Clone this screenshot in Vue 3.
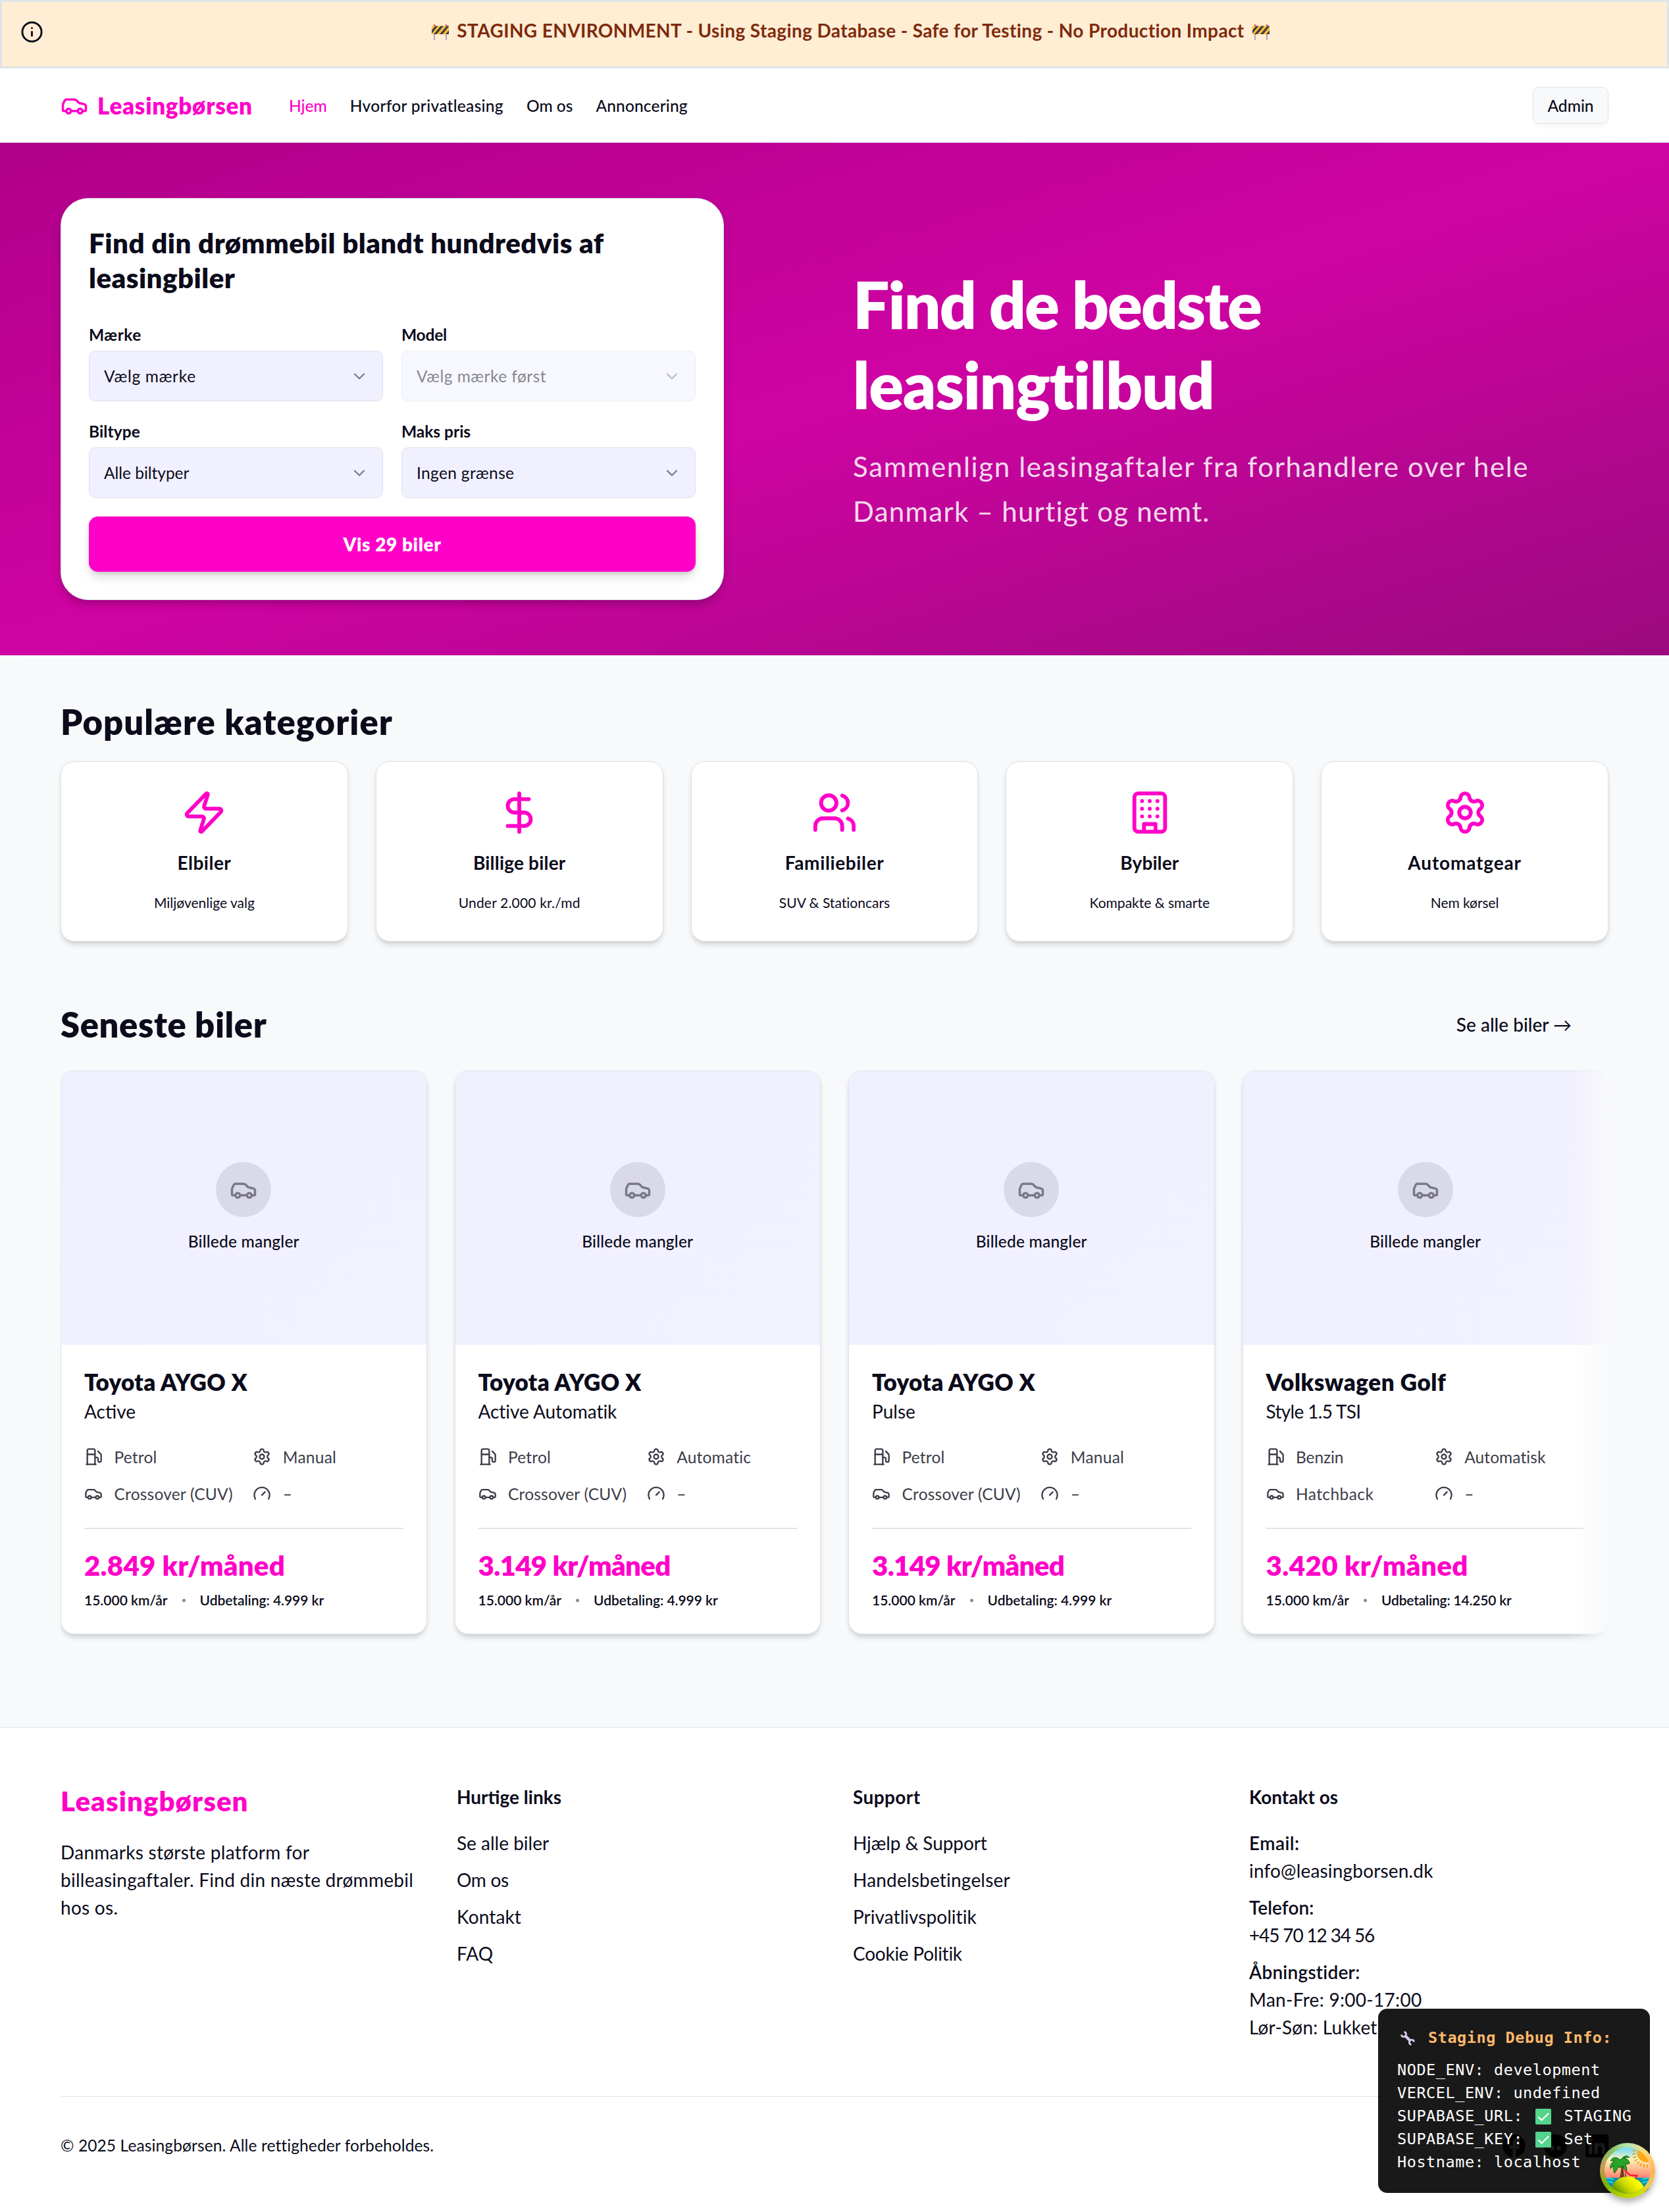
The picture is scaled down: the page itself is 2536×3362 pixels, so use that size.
<script setup>
import { h } from 'vue'

const icons = {
  info: '<circle cx="12" cy="12" r="10"/><path d="M12 16v-4"/><path d="M12 8h.01"/>',
  car: '<path d="M19 17h2c.6 0 1-.4 1-1v-3c0-.9-.7-1.7-1.5-1.9C18.7 10.6 16 10 16 10s-1.3-1.4-2.2-2.3c-.5-.4-1.1-.7-1.8-.7H5c-.6 0-1.1.4-1.4.9l-1.4 2.9A3.7 3.7 0 0 0 2 12v4c0 .6.4 1 1 1h2"/><circle cx="7" cy="17" r="2"/><path d="M9 17h6"/><circle cx="17" cy="17" r="2"/>',
  chevron: '<path d="m6 9 6 6 6-6"/>',
  zap: '<path d="M4 14a1 1 0 0 1-.78-1.63l9.9-10.2a.5.5 0 0 1 .86.46l-1.92 6.02A1 1 0 0 0 13 10h7a1 1 0 0 1 .78 1.63l-9.9 10.2a.5.5 0 0 1-.86-.46l1.92-6.02A1 1 0 0 0 11 14z"/>',
  dollar: '<path d="M12 2v20"/><path d="M17 5H9.5a3.5 3.5 0 0 0 0 7h5a3.5 3.5 0 0 1 0 7H6"/>',
  users: '<path d="M16 21v-2a4 4 0 0 0-4-4H6a4 4 0 0 0-4 4v2"/><path d="M16 3.128a4 4 0 0 1 0 7.744"/><path d="M22 21v-2a4 4 0 0 0-3-3.87"/><circle cx="9" cy="7" r="4"/>',
  building: '<rect width="16" height="20" x="4" y="2" rx="2"/><path d="M9 22v-4h6v4"/><path d="M8 6h.01M16 6h.01M12 6h.01M12 10h.01M12 14h.01M16 10h.01M16 14h.01M8 10h.01M8 14h.01"/>',
  gear: '<path d="M9.671 4.136a2.34 2.34 0 0 1 4.659 0 2.34 2.34 0 0 0 3.319 1.915 2.34 2.34 0 0 1 2.33 4.033 2.34 2.34 0 0 0 0 3.831 2.34 2.34 0 0 1-2.33 4.033 2.34 2.34 0 0 0-3.319 1.915 2.34 2.34 0 0 1-4.659 0 2.34 2.34 0 0 0-3.32-1.915 2.34 2.34 0 0 1-2.33-4.033 2.34 2.34 0 0 0 0-3.831A2.34 2.34 0 0 1 6.35 6.051a2.34 2.34 0 0 0 3.319-1.915"/><circle cx="12" cy="12" r="3"/>',
  fuel: '<path d="M3 22h12"/><path d="M4 9h10"/><path d="M14 22V4a2 2 0 0 0-2-2H6a2 2 0 0 0-2 2v18"/><path d="M14 13h2a2 2 0 0 1 2 2v2a2 2 0 0 0 2 2a2 2 0 0 0 2-2V9.83a2 2 0 0 0-.59-1.42L18 5"/>',
  gauge: '<path d="m12 14 4-4"/><path d="M3.34 19a10 10 0 1 1 17.32 0"/>',
}

const Icon = (props) =>
  h('svg', {
    viewBox: '0 0 24 24',
    width: props.size,
    height: props.size,
    fill: 'none',
    stroke: 'currentColor',
    'stroke-width': props.stroke || 2,
    'stroke-linecap': 'round',
    'stroke-linejoin': 'round',
    innerHTML: icons[props.name],
  })
Icon.props = ['name', 'size', 'stroke']

const Barrier = () =>
  h('svg', {
    viewBox: '0 0 26 24',
    width: 26,
    height: 24,
    innerHTML:
      '<path d="M4 15v9M22 15v9" stroke="#b5a3bb" stroke-width="2"/><circle cx="4" cy="1.6" r="1.4" fill="#d8355c"/><circle cx="22" cy="1.6" r="1.4" fill="#d8355c"/><rect y="2.5" width="26" height="12.5" rx="1" fill="#fcc034"/><path d="M0 9l5.500-6.500h4L0 14zM3 15l10.500-12.500h4.500L7.500 15zM12 15l10.500-12.500H26v.8L16.500 15zM21 15l5-6v6z" fill="#433b4b"/>',
  })

const CheckBox = () =>
  h('svg', {
    viewBox: '0 0 24 24',
    width: 24,
    height: 24,
    innerHTML:
      '<rect width="24" height="24" rx="1.500" fill="#55d48b"/><path d="M5 13l4.500 4.500L19.500 7.500" fill="none" stroke="#fff" stroke-width="2.200" stroke-linecap="round" stroke-linejoin="round"/>',
  })

const nav = [
  { t: 'Hjem', ls: 0, active: true },
  { t: 'Hvorfor privatleasing', ls: 0.3 },
  { t: 'Om os', ls: 0 },
  { t: 'Annoncering', ls: 0.15 },
]

const fields = [
  { label: 'Mærke', lls: 0.49, value: 'Vælg mærke', ls: 0.7 },
  { label: 'Model', lls: -0.2, value: 'Vælg mærke først', ls: 0.48, disabled: true },
  { label: 'Biltype', lls: 0.09, value: 'Alle biltyper', ls: -0.02 },
  { label: 'Maks pris', lls: 0, value: 'Ingen grænse', ls: 0.35 },
]

const categories = [
  { icon: 'zap', t: 'Elbiler', ls: 0.49, s: 'Miljøvenlige valg', sls: 0 },
  { icon: 'dollar', t: 'Billige biler', ls: 0.2, s: 'Under 2.000 kr./md', sls: 0.18 },
  { icon: 'users', t: 'Familiebiler', ls: 0.63, s: 'SUV & Stationcars', sls: 0.02 },
  { icon: 'building', t: 'Bybiler', ls: 0.1, s: 'Kompakte & smarte', sls: 0 },
  { icon: 'gear', t: 'Automatgear', ls: 0.84, s: 'Nem kørsel', sls: -0.05 },
]

const cuv = ['car', 'Crossover (CUV)', 0.22]
const none = ['gauge', '–', 0]
const cars = [
  { t: 'Toyota AYGO X', ls: 0.35, v: 'Active', vls: 0, specs: [['fuel', 'Petrol', 0.2], ['gear', 'Manual', 0.25], cuv, none], price: '2.849 kr/måned', pls: 0.22, pay: 'Udbetaling: 4.999 kr', yls: -0.04 },
  { t: 'Toyota AYGO X', ls: 0.35, v: 'Active Automatik', vls: -0.05, specs: [['fuel', 'Petrol', 0.2], ['gear', 'Automatic', 0.2], cuv, none], price: '3.149 kr/måned', pls: -0.7, pay: 'Udbetaling: 4.999 kr', yls: -0.04 },
  { t: 'Toyota AYGO X', ls: 0.35, v: 'Pulse', vls: 0, specs: [['fuel', 'Petrol', 0.2], ['gear', 'Manual', 0.25], cuv, none], price: '3.149 kr/måned', pls: -0.7, pay: 'Udbetaling: 4.999 kr', yls: -0.04 },
  { t: 'Volkswagen Golf', ls: 0.55, v: 'Style 1.5 TSI', vls: -0.65, specs: [['fuel', 'Benzin', -0.1], ['gear', 'Automatisk', 0.08], ['car', 'Hatchback', 0.42], none], price: '3.420 kr/måned', pls: 0.38, pay: 'Udbetaling: 14.250 kr', yls: -0.19 },
]

const linkColumns = [
  { title: 'Hurtige links', tls: 0, links: [['Se alle biler', 0], ['Om os', -0.3], ['Kontakt', 0.15], ['FAQ', 0]] },
  { title: 'Support', tls: 0.4, links: [['Hjælp & Support', -0.08], ['Handelsbetingelser', 0.2], ['Privatlivspolitik', 0.05], ['Cookie Politik', -0.25]] },
]

const contact = [
  { k: 'Email:', kls: 0.42, lines: [['info@leasingborsen.dk', 0.18]] },
  { k: 'Telefon:', kls: 0.06, lines: [['+45 70 12 34 56', -1.15]] },
  { k: 'Åbningstider:', kls: 0.23, lines: [['Man-Fre: 9:00-17:00', 0.3], ['Lør-Søn: Lukket', 0.2]] },
]

const sp = (v) => ({ letterSpacing: v + 'px' })
</script>

<template>
  <div class="page">
    <div class="banner">
      <Icon name="info" :size="35" />
      <div class="banner-text"><Barrier /><span>STAGING ENVIRONMENT - Using Staging Database - Safe for Testing - No Production Impact</span><Barrier /></div>
    </div>

    <header class="header">
      <div class="logo"><Icon name="car" :size="42" /><span>Leasingbørsen</span></div>
      <nav class="nav">
        <a v-for="n in nav" :key="n.t" :class="{ active: n.active }" :style="sp(n.ls)">{{ n.t }}</a>
      </nav>
      <button class="admin">Admin</button>
    </header>

    <section class="hero">
      <div class="search">
        <h2>Find din drømmebil blandt hundredvis af leasingbiler</h2>
        <div class="fields">
          <div v-for="f in fields" :key="f.label" class="field">
            <label :style="sp(f.lls)">{{ f.label }}</label>
            <div class="select" :class="{ disabled: f.disabled }">
              <span :style="sp(f.ls)">{{ f.value }}</span>
              <Icon name="chevron" :size="28" />
            </div>
          </div>
        </div>
        <button class="submit">Vis 29 biler</button>
      </div>
      <div class="pitch">
        <h1><span class="l1">Find de bedste</span><br /><span class="l2">leasingtilbud</span></h1>
        <p><span class="l3">Sammenlign leasingaftaler fra forhandlere over hele</span><br /><span class="l4">Danmark – hurtigt og nemt.</span></p>
      </div>
    </section>

    <main class="main">
      <h2 class="section-title popular">Populære kategorier</h2>
      <div class="categories">
        <div v-for="c in categories" :key="c.t" class="category">
          <Icon :name="c.icon" :size="70" />
          <h3 :style="sp(c.ls)">{{ c.t }}</h3>
          <p :style="sp(c.sls)">{{ c.s }}</p>
        </div>
      </div>

      <div class="section-head">
        <h2 class="section-title latest">Seneste biler</h2>
        <a class="all">Se alle biler <span class="arrow">→</span></a>
      </div>
      <div class="cars">
        <article v-for="(c, i) in cars" :key="i" class="car">
          <div class="photo">
            <div class="badge"><Icon name="car" :size="42" /></div>
            <span>Billede mangler</span>
          </div>
          <div class="body">
            <h3 :style="sp(c.ls)">{{ c.t }}</h3>
            <p class="variant" :style="sp(c.vls)">{{ c.v }}</p>
            <div class="specs">
              <div v-for="s in c.specs" :key="s[0]" class="spec">
                <Icon :name="s[0]" :size="28" />
                <span :style="sp(s[2])">{{ s[1] }}</span>
              </div>
            </div>
            <div class="rule"></div>
            <div class="price" :style="sp(c.pls)">{{ c.price }}</div>
            <div class="meta">
              <span>15.000 km/år</span><i></i><span :style="sp(c.yls)">{{ c.pay }}</span>
            </div>
          </div>
        </article>
      </div>
    </main>

    <footer class="footer">
      <div class="columns">
        <div>
          <div class="brand">Leasingbørsen</div>
          <p class="about">Danmarks største platform for<br />billeasingaftaler. Find din næste drømmebil<br />hos os.</p>
        </div>
        <div v-for="col in linkColumns" :key="col.title">
          <h4 :style="sp(col.tls)">{{ col.title }}</h4>
          <div class="links">
            <a v-for="l in col.links" :key="l[0]" :style="sp(l[1])">{{ l[0] }}</a>
          </div>
        </div>
        <div>
          <h4>Kontakt os</h4>
          <div class="links">
            <div v-for="c in contact" :key="c.k">
              <div class="key" :style="sp(c.kls)">{{ c.k }}</div>
              <div v-for="l in c.lines" :key="l[0]" :style="sp(l[1])">{{ l[0] }}</div>
            </div>
          </div>
        </div>
      </div>
      <div class="bottom">
        <span>© 2025 Leasingbørsen. Alle rettigheder forbeholdes.</span>
        <div class="social">
          <svg viewBox="0 0 36 36"><path fill-rule="evenodd" d="M18 0a18 18 0 0 1 3 35.700V23h5l1-5.500h-6V14c0-2 1-3 3-3h3V6c-7-1.500-11 1-11 7v4.500h-5V23h5v12.900A18 18 0 0 1 18 0z" /></svg>
          <svg viewBox="0 0 36 36"><path fill-rule="evenodd" d="M18 0a18 18 0 1 1 0 36a18 18 0 1 1 0-36zM13 18a3.500 3.500 0 1 0 0 7a3.500 3.500 0 1 0 0-7zM23 18a3.500 3.500 0 1 0 0 7a3.500 3.500 0 1 0 0-7z" /></svg>
          <svg viewBox="0 0 36 36"><path fill-rule="evenodd" d="M2 0h32q2 0 2 2v32q0 2-2 2H2q-2 0-2-2V2q0-2 2-2zM5.500 13.500h5.300v17H5.500zM8.100 5a3.100 3.100 0 1 1 0 6.200a3.100 3.100 0 1 1 0-6.200zM14 13.500h5v2.400c2.500-4.300 11.700-4 11.700 4.600v10h-5.300v-9c0-5-6.100-4.500-6.100 0v9H14z" /></svg>
        </div>
      </div>
    </footer>

    <aside class="debug">
      <div class="debug-title">
        <svg class="wrench" viewBox="0 0 24 24" width="24" height="24" fill="none" stroke="#d6c9e8"><path d="M8 8l8 8" stroke-width="4.200" /><path d="M6.500 2.400A3.600 3.600 0 1 1 2.400 6.500M17.500 21.600A3.600 3.600 0 1 1 21.600 17.500" stroke-width="2.800" /></svg>
        <span>Staging Debug Info:</span>
      </div>
      <div>NODE_ENV: development</div>
      <div>VERCEL_ENV: undefined</div>
      <div class="row">SUPABASE_URL: <CheckBox class="check" /> STAGING</div>
      <div class="row">SUPABASE_KEY: <CheckBox class="check" /> Set</div>
      <div>Hostname: localhost</div>
    </aside>

    <div class="island">
      <svg viewBox="0 0 84 84" width="84" height="84">
        <defs>
          <linearGradient id="sky" x1="0" y1="7" x2="0" y2="54" gradientUnits="userSpaceOnUse">
            <stop offset="0" stop-color="#6bdcff" /><stop offset=".4" stop-color="#fdf3b8" /><stop offset=".72" stop-color="#ffb489" /><stop offset="1" stop-color="#ff7f70" />
          </linearGradient>
          <linearGradient id="sand" x1="25" y1="77" x2="50" y2="54" gradientUnits="userSpaceOnUse">
            <stop offset="0" stop-color="#4f8f00" /><stop offset=".5" stop-color="#c4d400" /><stop offset="1" stop-color="#fdfb00" />
          </linearGradient>
          <clipPath id="disc"><circle cx="42" cy="42" r="35" /></clipPath>
        </defs>
        <g clip-path="url(#disc)">
          <rect width="84" height="84" fill="url(#sky)" />
          <circle cx="71" cy="15" r="14.500" fill="#ffa914" />
          <path d="M52 11A20 20 0 0 0 74 35" fill="none" stroke="#ff9612" stroke-width="5" stroke-dasharray="1.800 3.200" />
          <rect y="53" width="84" height="31" fill="#0a8fa8" />
          <path d="M5 56q8-4 16 0M6 61q8-4 14 0M64 56q8-4 14 0M64 61q8-4 14 0" fill="none" stroke="#10d2e2" stroke-width="2.500" />
          <path d="M31 27q3 12-1 26h7q-1-15-3-27z" fill="#6b3f1d" />
          <path d="M31 26q-9-8-15 1q4 0 6 0q-7 5-6 12l5-4q-1 5 1 11q5-6 6-11l2 3l5-3q2 7 6 7q0-6-3-10q5 1 7-1q-1-7-9-8q5-2 9-1q-6-6-14 4z" fill="#28a428" stroke="#0d5b13" stroke-width="1" />
          <circle cx="42" cy="78" r="27" fill="url(#sand)" />
          <path d="M38 42l8 7l11 1" fill="none" stroke="#f5162f" stroke-width="2.300" stroke-linecap="round" />
          <path d="M39 45v7M55 51v5" stroke="#2b1a14" stroke-width="1" />
        </g>
      </svg>
    </div>
  </div>
</template>

<style>
html,
body {
  margin: 0;
  overflow: hidden;
}
</style>

<style scoped>
.page {
  width: 2536px;
  height: 3362px;
  position: relative;
  background: #f8f9fb;
  color: #0b0b1b;
  font-family: Lato, "Liberation Sans", sans-serif;
  font-size: 28px;
  font-kerning: normal;
}
.page * {
  box-sizing: border-box;
}
h1, h2, h3, h4, p {
  margin: 0;
}
svg {
  display: block;
  flex: none;
}
button {
  font-family: inherit;
  color: inherit;
  padding: 0;
}

.banner {
  height: 104px;
  display: flex;
  align-items: flex-start;
  gap: 14px;
  padding: 28px;
  border: 3px solid #dde5e8;
  background: #ffedd4;
}
.banner-text {
  flex: 1;
  display: flex;
  justify-content: center;
  gap: 12px;
  color: #7e2a0c;
  font-weight: 700;
  line-height: 31px;
  letter-spacing: 0.38px;
}
.banner-text svg {
  margin-top: 6px;
}

.header {
  height: 113px;
  display: flex;
  align-items: center;
  padding: 0 92px;
  background: #fff;
  border-bottom: 1px solid #dde5e8;
}
.logo {
  display: flex;
  align-items: center;
  gap: 14px;
  width: 347px;
  color: #ff00c8;
  font-size: 35px;
  font-weight: 800;
  line-height: 42px;
  letter-spacing: 0.7px;
}
.nav {
  flex: 1;
  display: flex;
  gap: 35px;
  font-size: 24.5px;
  font-weight: 500;
  line-height: 37px;
}
.nav .active {
  color: #ff00c8;
}
.admin {
  width: 115px;
  height: 56px;
  border: 1px solid #dde5e8;
  border-radius: 10px;
  background: #f8f9fb;
  font-size: 24.5px;
  font-weight: 500;
  box-shadow: 0 6px 10px -3px rgba(0, 0, 0, 0.05);
}

.hero {
  height: 779px;
  display: grid;
  grid-template-columns: 1008px 1fr;
  column-gap: 196px;
  align-items: center;
  padding: 0 92px;
  background: linear-gradient(to bottom right, #b0008a 0%, #cf03a3 50%, #9b0a7e 100%);
}
.search {
  height: 611px;
  padding: 41px 42px 42px;
  border: 1px solid #dde5e8;
  border-radius: 42px;
  background: #fff;
  box-shadow: 0 7px 14px -2px rgba(0, 0, 0, 0.25);
}
.search h2 {
  font-size: 42px;
  font-weight: 800;
  line-height: 52.5px;
  letter-spacing: 0.48px;
}
.fields {
  margin-top: 48px;
  display: grid;
  grid-template-columns: 1fr 1fr;
  gap: 33px 28px;
}
.field label {
  display: block;
  margin-bottom: 12px;
  font-size: 24.5px;
  font-weight: 700;
  line-height: 25px;
}
.select {
  height: 77px;
  display: flex;
  align-items: center;
  justify-content: space-between;
  padding: 0 21px 0 22px;
  border: 1px solid #dde0ec;
  border-radius: 10px;
  background: #f1f0ff;
  font-size: 24.5px;
}
.select svg {
  opacity: 0.5;
}
.select.disabled {
  opacity: 0.5;
}
.submit {
  display: block;
  width: 100%;
  height: 84px;
  margin-top: 28px;
  border: 0;
  border-radius: 14px;
  background: #ff00c8;
  color: #fff;
  font-size: 28px;
  font-weight: 800;
  letter-spacing: 0.6px;
  box-shadow: 0 10px 16px -3px rgba(0, 0, 0, 0.16), 0 2px 5px rgba(0, 0, 0, 0.1);
}
.pitch {
  color: #fff;
}
.pitch h1 {
  margin: -1px 0 29px;
  font-size: 98px;
  font-weight: 800;
  line-height: 122.5px;
}
.l1 {
  letter-spacing: -1.95px;
}
.l2 {
  letter-spacing: -1.25px;
}
.pitch p {
  font-size: 42px;
  line-height: 68.25px;
  opacity: 0.85;
}
.l3 {
  letter-spacing: 1.64px;
}
.l4 {
  letter-spacing: 1.26px;
}

.main {
  height: 1629px;
  padding: 69px 92px 0;
}
.section-title {
  font-size: 52.5px;
  font-weight: 800;
  line-height: 63px;
}
.popular {
  letter-spacing: 1.1px;
}
.latest {
  letter-spacing: 0.6px;
}
.categories {
  margin-top: 29px;
  display: grid;
  grid-template-columns: repeat(5, 1fr);
  gap: 42px;
}
.category {
  height: 274px;
  display: flex;
  flex-direction: column;
  align-items: center;
  padding-top: 42px;
  border: 1px solid #dde5e8;
  border-radius: 21px;
  background: #fff;
  box-shadow: 0 7px 10px -3px rgba(0, 0, 0, 0.16), 0 1px 6px rgba(0, 0, 0, 0.05);
}
.category svg {
  color: #ff00c8;
}
.category h3 {
  margin-top: 20px;
  font-size: 28px;
  font-weight: 700;
  line-height: 43px;
}
.category p {
  margin-top: 24px;
  font-size: 21px;
  line-height: 29px;
}
.section-head {
  margin-top: 94px;
  display: flex;
  align-items: center;
  justify-content: space-between;
}
.all {
  padding-right: 56px;
  font-weight: 500;
  line-height: 42px;
}
.arrow {
  font-weight: 400;
}
.cars {
  position: relative;
  margin-top: 39px;
  padding-bottom: 28px;
  overflow: hidden;
  display: grid;
  grid-template-columns: repeat(4, 1fr);
  gap: 42px;
}
.cars::after {
  content: "";
  position: absolute;
  inset: 0 0 0 auto;
  width: 56px;
  background: linear-gradient(to left, #f8f9fb, rgba(248, 249, 251, 0));
}
.car {
  height: 857px;
  overflow: hidden;
  border: 1px solid #dde5e8;
  border-radius: 21px;
  background: #fff;
  box-shadow: 0 7px 10px -3px rgba(0, 0, 0, 0.16), 0 1px 6px rgba(0, 0, 0, 0.05);
}
.photo {
  height: 416px;
  display: flex;
  flex-direction: column;
  align-items: center;
  padding-top: 138px;
  background: linear-gradient(135deg, #f0effe, #f2f1ff);
  font-size: 24.5px;
  font-weight: 500;
  line-height: 37px;
  letter-spacing: 0.2px;
}
.badge {
  width: 84px;
  height: 84px;
  display: grid;
  place-items: center;
  margin-bottom: 18px;
  border-radius: 50%;
  background: #dad9e7;
  color: #7a798a;
}
.body {
  padding: 33.5px 35px 0;
}
.body h3 {
  font-size: 35px;
  font-weight: 800;
  line-height: 44px;
}
.variant {
  margin-top: 2.5px;
  line-height: 42px;
}
.specs {
  margin-top: 34px;
  display: grid;
  grid-template-columns: 1fr 1fr;
  gap: 28px;
}
.spec {
  height: 28px;
  display: flex;
  align-items: center;
  gap: 17.5px;
  font-size: 24.5px;
  line-height: 29px;
  white-space: nowrap;
  color: #3c3c49;
}
.rule {
  height: 2px;
  margin: 38px 0 28.5px;
  background: #dde5e8;
}
.price {
  color: #ff00c8;
  font-size: 42px;
  font-weight: 800;
  line-height: 52px;
}
.meta {
  margin-top: 13.5px;
  display: flex;
  align-items: center;
  font-size: 21px;
  font-weight: 600;
  line-height: 28px;
}
.meta i {
  width: 5px;
  height: 5px;
  margin: 0 22px 0 22px;
  border-radius: 50%;
  background: #8b8b95;
}

.footer {
  height: 737px;
  padding: 84px 92px 0;
  border-top: 1px solid #dde5e8;
  background: #fff;
  line-height: 42px;
}
.columns {
  height: 476px;
  display: grid;
  grid-template-columns: repeat(4, 1fr);
  gap: 56px;
}
.brand {
  color: #ff00c8;
  font-size: 42px;
  font-weight: 800;
  line-height: 55px;
  letter-spacing: 1.05px;
}
.about {
  margin-top: 28.5px;
  letter-spacing: 0.27px;
  white-space: nowrap;
}
.footer h4 {
  font-size: 28px;
  font-weight: 700;
}
.links {
  margin-top: 28px;
  display: flex;
  flex-direction: column;
  gap: 14px;
}
.key {
  font-weight: 600;
}
.bottom {
  padding-top: 56px;
  display: flex;
  align-items: center;
  justify-content: space-between;
  border-top: 1px solid #e0e6e9;
  font-size: 24.5px;
  line-height: 36px;
  letter-spacing: 0.12px;
}
.social {
  display: flex;
  gap: 28px;
}
.social svg {
  width: 35px;
  height: 35px;
  fill: #0b0b1b;
}

.debug {
  position: absolute;
  left: 2094px;
  top: 3053px;
  width: 413px;
  height: 280px;
  padding: 26px 28px;
  border: 1px solid rgba(0, 0, 0, 0.1);
  border-radius: 14px;
  background: rgba(0, 0, 0, 0.9);
  color: #fff;
  font-family: "DejaVu Sans Mono", "Liberation Mono", monospace;
  font-size: 23.5px;
  line-height: 35px;
  letter-spacing: 0.55px;
  white-space: pre;
}
.debug-title {
  display: flex;
  align-items: center;
  margin-bottom: 14px;
  color: #ffb86a;
  font-weight: 700;
}
.wrench {
  margin: 0 19px 0 4px;
}
.row {
  display: flex;
  align-items: center;
}
.check {
  margin: 0 5px 0 4px;
}
.island {
  position: absolute;
  left: 2431px;
  top: 3257px;
  width: 84px;
  height: 84px;
  border-radius: 50%;
  background: conic-gradient(#b4e6b4, #ffd97a 45deg, #ffb35c 90deg, #f0c455 120deg, #cfe000 150deg, #b4d000 195deg, #78b400 235deg, #c89858 275deg, #86c060 320deg, #b4e6b4);
  box-shadow: 0 6px 10px rgba(0, 0, 0, 0.3);
}
</style>
